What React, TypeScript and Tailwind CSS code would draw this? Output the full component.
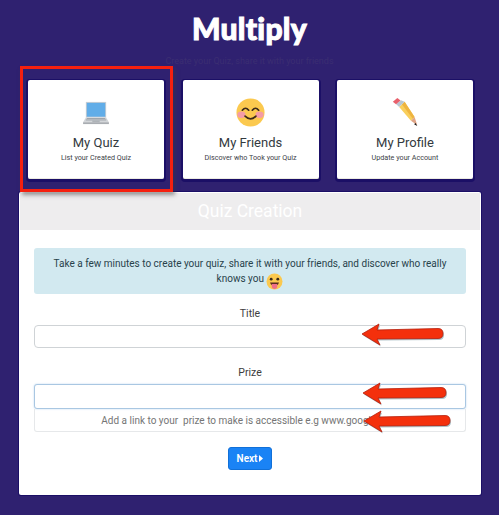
import React from "react";

const Laptop = () => (
  <svg width="28" height="24" viewBox="0 0 30 26" className="block">
    <rect x="4" y="1" width="22" height="17" fill="#c9ced3" />
    <rect x="5" y="2" width="20" height="15" fill="#61ade8" />
    <path d="M4 18h22l3 5H1z" fill="#d3d6d9" />
    <path d="M5 19h20M4 20.500h22" stroke="#9aa0a6" strokeWidth="1" />
    <rect x="11" y="21" width="8" height="2" fill="#aeb3b8" />
    <rect x="1" y="23" width="28" height="2" fill="#a9adb2" />
  </svg>
);

const Smile = () => (
  <svg width="29" height="29" viewBox="0 0 32 32" className="block">
    <circle cx="16" cy="16" r="15.500" fill="#fbc94f" />
    <ellipse cx="6" cy="18.500" rx="4.500" ry="3.600" fill="#f49ba6" />
    <ellipse cx="26" cy="18.500" rx="4.500" ry="3.600" fill="#f49ba6" />
    <path d="M7 13.500q3.500-4.500 7 0M18 13.500q3.500-4.500 7 0" fill="none" stroke="#3b2a1a" strokeWidth="1.800" strokeLinecap="round" />
    <path d="M10 20q6 6 12 0" fill="none" stroke="#3b2a1a" strokeWidth="1.800" strokeLinecap="round" />
  </svg>
);

const Pencil = () => (
  <svg width="29" height="29" viewBox="0 0 30 32" className="block">
    <path d="M8 10 L14 4 L25 21 L21 25z" fill="#f9cf5c" />
    <path d="M11 7 L14 4 L25 21 L23 23z" fill="#eeb43f" />
    <path d="M21 25 L25 21 L28 30z" fill="#dfa486" />
    <path d="M26 27.500 L28 31 L24.500 29z" fill="#111" />
    <path d="M4.500 6.500 L10 2.500 L14 4 L8 10z" fill="#b8c6d2" />
    <path d="M1 4 L6 0 L9.500 2.800 L4.500 6.800z" fill="#e8606c" />
  </svg>
);

const Tongue = () => (
  <svg width="17" height="17" viewBox="0 0 17 17" className="-my-[4px] inline-block align-[-4px]">
    <circle cx="8.500" cy="8.500" r="8" fill="#fbc94f" />
    <circle cx="5.200" cy="6.200" r="1.400" fill="#3b2a1a" />
    <circle cx="11.800" cy="6.200" r="1.400" fill="#3b2a1a" />
    <path d="M4 9.500h9q-.6 2.200-2 2.800H6q-1.400-.6-2-2.800z" fill="#5a2d20" />
    <path d="M5.800 11h5.400v2.200a2.700 2.700 0 0 1-5.400 0z" fill="#ef6f88" />
  </svg>
);

const Arrow = ({ className, width }: { className: string; width: number }) => {
  const d = `M1 11 L18 1 L16 7 L${width - 6} 5.500 Q${width - 1} 5.500 ${width - 1} 10.500 Q${width - 1} 15.500 ${width - 6} 15.500 L16 16 L19 22z`;
  return (
    <svg width={width + 2} height="25" viewBox={`0 0 ${width + 2} 25`} className={className}>
      <path d={d} fill="#8fa9b2" transform="translate(1 1.500)" opacity="0.7" />
      <path d={d} fill="#f4300c" stroke="#b51d0a" strokeWidth="0.8" />
    </svg>
  );
};

const Card = ({ icon, title, sub }: { icon: React.ReactNode; title: string; sub: string }) => (
  <div className="flex h-[99px] w-[136px] flex-col items-center rounded-[2px] border-b border-[#ecebe2] bg-white shadow-[0_0_0_1px_#1b0f66,0_1px_0_2px_#1b0f66]">
    <div className="mt-[18px] flex h-[29px] items-center justify-center">{icon}</div>
    <div className="mt-[7px] text-[13px] leading-[18px] text-[#333a40]">{title}</div>
    <div className="text-[7.2px] leading-[12px] text-[#3c4248]">{sub}</div>
  </div>
);

export default function App() {
  return (
    <div className="relative h-[515px] w-[499px] overflow-hidden bg-[#2f2170] font-['Roboto','Noto_Sans',sans-serif]">
      <div className="flex h-[80px] flex-col items-center">
        <h1 className="mt-[8px] font-['Lato','Open_Sans',sans-serif] text-[30px] leading-[40px] font-black tracking-[0.3px] text-white [-webkit-text-stroke:1px_white]">
          Multiply
        </h1>
        <p className="mt-[7px] text-[9px] leading-[12px] text-[#3b2e72]">Create your Quiz, share it with your friends</p>
      </div>

      <div className="flex gap-[18.5px] pl-[28px]">
        <Card icon={<Laptop />} title="My Quiz" sub="List your Created Quiz" />
        <Card icon={<Smile />} title="My Friends" sub="Discover who Took your Quiz" />
        <Card icon={<Pencil />} title="My Profile" sub="Update your Account" />
      </div>

      <div className="mt-[13px] ml-[19px] w-[462px] rounded-[2px] bg-white px-[1px] pt-[1px] shadow-[0_0_0_1px_#1b0f66]">
        <div className="flex h-[37px] items-center justify-center bg-[#eeedee] text-[17.5px] text-white">Quiz Creation</div>

        <div className="px-[14px]">
          <div className="mt-[18px] rounded-[3px] bg-[#d2e9f0] px-[18px] py-[8px] text-center text-[10px] leading-[15px] text-[#28424b]">
            Take a few minutes to create your quiz, share it with your friends, and discover who really knows you <Tongue />
          </div>

          <label className="mt-[12px] block text-center text-[10.5px] leading-[16px] text-[#3d3d3d]">Title</label>
          <div className="mt-[3px] h-[23px] rounded-[4px] border border-[#cfd3d6] bg-white" />

          <label className="mt-[17px] block text-center text-[10.5px] leading-[16px] text-[#3d3d3d]">Prize</label>
          <div className="mt-[3px] h-[25px] rounded-[3px] border border-[#a9c7e2] bg-white shadow-[0_0_2px_#bcd6ee]" />
          <div className="h-[23px] rounded-b-[3px] border border-t-0 border-[#e6e8ea] text-center text-[10px] leading-[23px] whitespace-pre text-[#757575]">
            Add a link to your  prize to make is accessible e.g www.google.com
          </div>

          <div className="mt-[15px] flex justify-center">
            <button className="flex h-[23px] w-[44px] items-center justify-center gap-[2px] rounded-[3px] border border-[#1170d8] bg-[#1a83f5] text-[10px] font-semibold text-white">
              Next
              <svg width="4" height="7" viewBox="0 0 4 7"><path d="M0 0l4 3.500L0 7z" fill="white" /></svg>
            </button>
          </div>
          <div className="h-[25px]" />
        </div>
      </div>

      <div className="pointer-events-none absolute top-[66px] left-[20px] h-[126px] w-[153px] border-[3px] border-[#f5200f] shadow-[2px_3px_4px_rgba(60,60,60,0.5)]" />
      <Arrow width={83} className="absolute top-[323px] left-[361px]" />
      <Arrow width={85} className="absolute top-[382px] left-[362px]" />
      <Arrow width={88} className="absolute top-[410px] left-[363px]" />
    </div>
  );
}
